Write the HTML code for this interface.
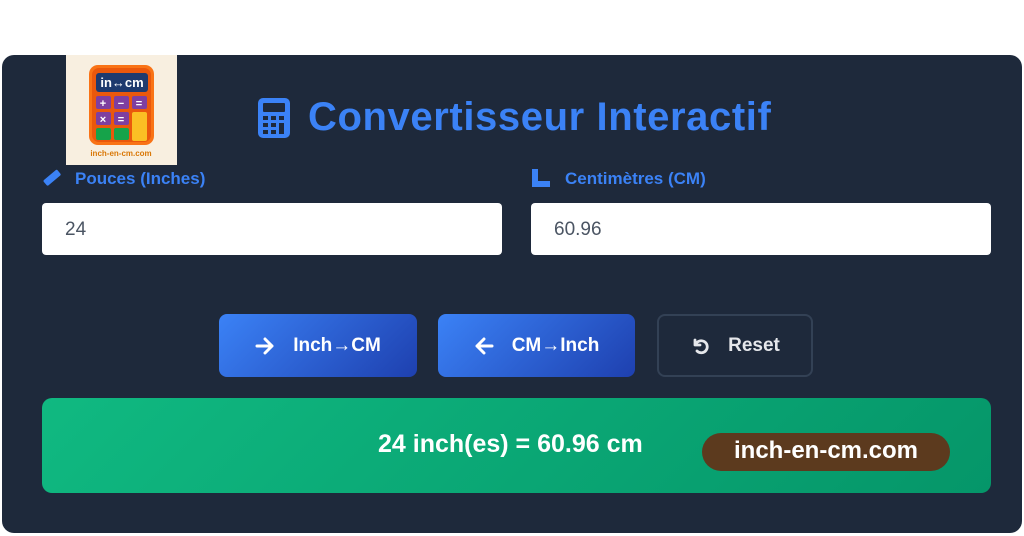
<!DOCTYPE html>
<html><head><meta charset="utf-8"><style>
*{margin:0;padding:0;box-sizing:border-box}
body{width:1024px;height:536px;background:#fff;font-family:"Liberation Sans",sans-serif;position:relative;overflow:hidden}
.card{position:absolute;left:2px;top:55px;width:1020px;height:478px;background:#1e293b;border-radius:12px}
.abs{position:absolute}
.logo{left:66px;top:55px;width:111px;height:110px;background:#f8efe0}
.title{left:308px;top:95px;font-size:40px;font-weight:bold;color:#3b82f6;white-space:nowrap;letter-spacing:0.6px}
.lbl{font-size:17px;font-weight:bold;color:#3b82f6;top:169px}
.inp{top:203px;height:52px;background:#fff;border-radius:4px;width:460px;font-size:19px;color:#4b5563;padding:16px 0 0 23px}
.btn{top:314px;height:63px;border-radius:8px;color:#fff;font-size:19px;font-weight:bold;display:flex;align-items:center;justify-content:center;gap:18px;background:linear-gradient(135deg,#3b82f6,#1e40af)}
.res{left:42px;top:398px;width:949px;height:95px;border-radius:10px;background:linear-gradient(135deg,#10b981,#059669)}
</style></head><body>
<div class="card"></div>
<div class="abs logo">
<svg width="111" height="110" viewBox="0 0 111 110">
<rect x="23" y="10" width="65" height="80" rx="9" fill="#f97316"/>
<rect x="26" y="13" width="59" height="74" rx="7" fill="#ea580c"/>
<rect x="30" y="18" width="52" height="19" rx="3" fill="#1e3a6e"/>
<text x="56" y="32" font-size="13" font-weight="bold" fill="#fff" text-anchor="middle" font-family="Liberation Sans">in↔cm</text>
<g fill="#7e3fa0"><rect x="30" y="41" width="15" height="13" rx="2"/><rect x="48" y="41" width="15" height="13" rx="2"/><rect x="66" y="41" width="15" height="13" rx="2"/><rect x="30" y="57" width="15" height="13" rx="2"/><rect x="48" y="57" width="15" height="13" rx="2"/></g>
<rect x="66" y="57" width="15" height="29" rx="2" fill="#fbbf24"/>
<g fill="#16a34a"><rect x="30" y="73" width="15" height="12" rx="2"/><rect x="48" y="73" width="15" height="12" rx="2"/></g>
<g fill="#fff" font-size="11" font-weight="bold" text-anchor="middle" font-family="Liberation Sans"><text x="37" y="52">+</text><text x="55" y="52">−</text><text x="73" y="52">=</text><text x="37" y="68">×</text><text x="55" y="68">=</text></g>
<text x="55" y="101" font-size="8" font-weight="bold" fill="#d97706" text-anchor="middle" font-family="Liberation Sans">inch-en-cm.com</text>
</svg></div>
<svg class="abs" style="left:258px;top:98px" width="32" height="40" viewBox="0 0 32 40"><rect width="32" height="40" rx="5" fill="#3b82f6"/><rect x="5" y="5" width="22" height="9" rx="1" fill="#1e293b"/><g fill="#1e293b"><rect x="5" y="18" width="5" height="4"/><rect x="13" y="18" width="5" height="4"/><rect x="21" y="18" width="5" height="4"/><rect x="5" y="25" width="5" height="4"/><rect x="13" y="25" width="5" height="4"/><rect x="21" y="25" width="5" height="11"/><rect x="5" y="32" width="5" height="4"/><rect x="13" y="32" width="5" height="4"/></g></svg>
<div class="abs title">Convertisseur Interactif</div>
<svg class="abs" style="left:41px;top:169px" width="20" height="18" viewBox="0 0 20 18"><rect x="2" y="6" width="18" height="7" rx="1.5" transform="rotate(-40 10 9)" fill="#3b82f6"/></svg>
<div class="abs lbl" style="left:75px">Pouces (Inches)</div>
<svg class="abs" style="left:531px;top:168px" width="20" height="20" viewBox="0 0 20 20"><path d="M1 1h6v12h12v6H1z" fill="#3b82f6"/></svg>
<div class="abs lbl" style="left:565px">Centimètres (CM)</div>
<div class="abs inp" style="left:42px">24</div>
<div class="abs inp" style="left:531px">60.96</div>
<div class="abs btn" style="left:219px;width:198px"><svg width="20" height="18" viewBox="0 0 20 18"><path d="M2 9h15M10 2l7 7-7 7" stroke="#fff" stroke-width="3" fill="none" stroke-linecap="round" stroke-linejoin="round"/></svg><span>Inch→CM</span></div>
<div class="abs btn" style="left:438px;width:197px"><svg width="20" height="18" viewBox="0 0 20 18"><path d="M18 9H3M10 2L3 9l7 7" stroke="#fff" stroke-width="3" fill="none" stroke-linecap="round" stroke-linejoin="round"/></svg><span>CM→Inch</span></div>
<div class="abs btn" style="left:657px;width:156px;background:transparent;border:2px solid #334155;color:#e5e7eb"><svg width="20" height="20" viewBox="0 0 20 20"><path d="M5 4v5h5M5.5 9A6 6 0 1 1 7 15" stroke="#e5e7eb" stroke-width="2.8" fill="none" stroke-linecap="round" stroke-linejoin="round"/></svg><span>Reset</span></div>
<div class="abs res"></div>
<div class="abs" style="left:378px;top:430px;font-size:25px;font-weight:bold;color:#fff;white-space:nowrap">24 inch(es) = 60.96 cm</div>
<div class="abs" style="left:702px;top:433px;width:248px;height:38px;border-radius:19px;background:#5c3a1e;color:#fff;font-size:24px;font-weight:bold;text-align:center;line-height:36px">inch-en-cm.com</div>
</body></html>
